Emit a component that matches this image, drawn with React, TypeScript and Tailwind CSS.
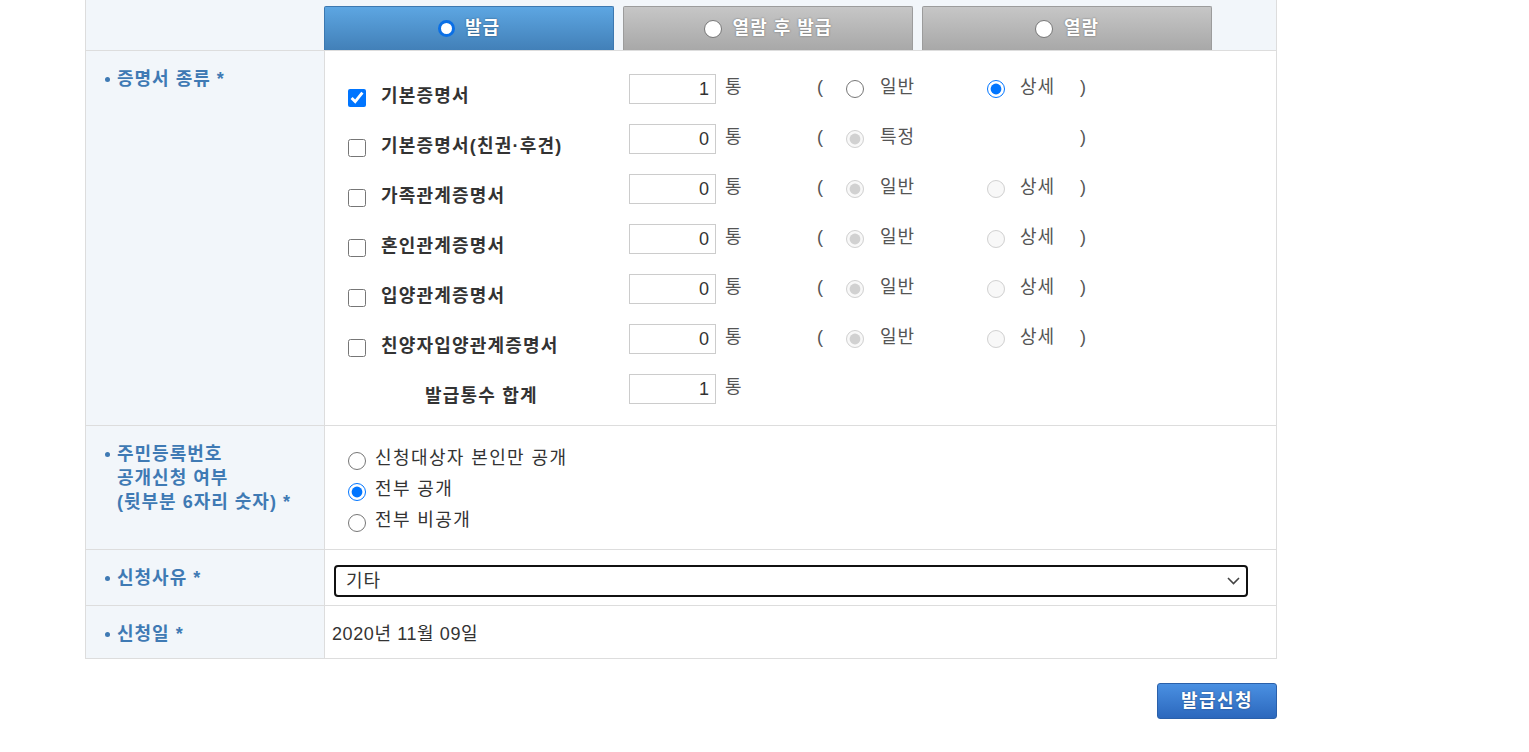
import { useState } from "react";

const certs = [
  { name: "기본증명서", checked: true, count: 1, opts: ["일반", "상세"], sel: 1, disabled: false },
  { name: "기본증명서(친권·후견)", checked: false, count: 0, opts: ["특정"], sel: 0, disabled: true },
  { name: "가족관계증명서", checked: false, count: 0, opts: ["일반", "상세"], sel: 0, disabled: true },
  { name: "혼인관계증명서", checked: false, count: 0, opts: ["일반", "상세"], sel: 0, disabled: true },
  { name: "입양관계증명서", checked: false, count: 0, opts: ["일반", "상세"], sel: 0, disabled: true },
  { name: "친양자입양관계증명서", checked: false, count: 0, opts: ["일반", "상세"], sel: 0, disabled: true },
];

const tabs = ["발급", "열람 후 발급", "열람"];

function Label({ children }: { children: React.ReactNode }) {
  return (
    <div className="flex items-start pl-[19px] pt-[16px] text-[18px] leading-[24px] tracking-[1px] font-bold text-[#3f7ab4]">
      <span className="mt-[10px] mr-[7px] w-[5px] h-[5px] rounded-full bg-[#3f7ab4] shrink-0" />
      <div>{children}</div>
    </div>
  );
}

function CountBox({ value }: { value: number }) {
  return (
    <div className="w-[87px] h-[30px] border border-[#cccccc] bg-white flex items-center justify-end pr-[6px] text-[18px] text-[#333]">
      {value}
    </div>
  );
}

export default function App() {
  const [tab] = useState(0);
  const [open, setOpen] = useState(1);

  return (
    <div className="w-[1529px] h-[752px] bg-white font-['Liberation_Sans','Noto_Sans_CJK_KR',sans-serif] text-[#333]">
      <div className="ml-[85px] w-[1192px] border-l border-r border-[#dddddd]">
        {/* tabs row */}
        <div className="h-[51px] bg-[#f2f6fa] border-b border-[#dddddd] flex gap-[9px] pl-[238px] pt-[6px]">
          {tabs.map((t, i) => (
            <div
              key={t}
              className={
                i === tab
                  ? "w-[290px] h-[44px] rounded-t-[2px] border border-b-0 border-[#3c78b0] bg-gradient-to-b from-[#5da6e2] to-[#4280b8] flex items-center justify-center gap-[10px]"
                  : "w-[290px] h-[44px] rounded-t-[2px] border border-b-0 border-[#9c9c9c] bg-gradient-to-b from-[#c6c6c6] to-[#a8a8a8] flex items-center justify-center gap-[11px]"
              }
            >
              <span
                className={
                  i === tab
                    ? "w-[17px] h-[17px] rounded-full bg-white border-[3px] border-[#0a6fe6]"
                    : "w-[18px] h-[18px] rounded-full bg-white border border-[#777]"
                }
              />
              <span className="text-[18px] tracking-[1px] font-bold text-white [text-shadow:0_0_2px_rgba(0,0,0,0.45)]">{t}</span>
            </div>
          ))}
        </div>

        {/* 증명서 종류 */}
        <div className="grid grid-cols-[238px_1fr] border-b border-[#dddddd] h-[375px]">
          <div className="bg-[#f2f6fa]">
            <Label>증명서 종류 *</Label>
          </div>
          <div className="border-l border-[#dddddd] pl-[23px] pt-[23px]">
            {certs.map((c) => (
              <div key={c.name} className="h-[50px] flex items-start">
                <div className="w-[281px] h-[24px] mt-[10px] flex items-center">
                  <input type="checkbox" checked={c.checked} readOnly className="m-0 w-[18px] h-[18px] mt-[4px]" />
                  <span className="ml-[15px] text-[18px] tracking-[1.2px] font-bold text-[#333] leading-[24px]">{c.name}</span>
                </div>
                <CountBox value={c.count} />
                <div className="h-[30px] flex items-center text-[18px] tracking-[1px] text-[#555]">
                  <span className="w-[101px] pl-[9px] -mt-[4px]">통</span>
                  <span className="w-[29px] -mt-[4px]">(</span>
                  <input
                    type="radio"
                    name={c.name}
                    checked={c.sel === 0}
                    disabled={c.disabled}
                    readOnly
                    className="m-0 w-[18px] h-[18px]"
                  />
                  <span className="w-[123px] pl-[16px] -mt-[4px]">{c.opts[0]}</span>
                  {c.opts[1] ? (
                    <input
                      type="radio"
                      name={c.name}
                      checked={c.sel === 1}
                      disabled={c.disabled}
                      readOnly
                      className="m-0 w-[18px] h-[18px]"
                    />
                  ) : (
                    <span className="w-[18px]" />
                  )}
                  <span className="w-[75px] pl-[15px] -mt-[4px]">{c.opts[1] ?? ""}</span>
                  <span className="-mt-[4px]">)</span>
                </div>
              </div>
            ))}
            <div className="h-[50px] flex items-start">
              <div className="w-[281px] h-[24px] mt-[10px] flex items-center pl-[77px]">
                <span className="text-[18px] tracking-[1.2px] font-bold text-[#333] leading-[24px]">발급통수 합계</span>
              </div>
              <CountBox value={1} />
              <div className="h-[30px] flex items-center text-[18px] text-[#555]">
                <span className="pl-[9px] -mt-[4px]">통</span>
              </div>
            </div>
          </div>
        </div>

        {/* 주민등록번호 공개 */}
        <div className="grid grid-cols-[238px_1fr] border-b border-[#dddddd] h-[124px]">
          <div className="bg-[#f2f6fa]">
            <Label>
              주민등록번호
              <br />
              공개신청 여부
              <br />
              (뒷부분 6자리 숫자) *
            </Label>
          </div>
          <div className="border-l border-[#dddddd] pl-[23px] pt-[19px]">
            {["신청대상자 본인만 공개", "전부 공개", "전부 비공개"].map((o, i) => (
              <label key={o} className="h-[31px] flex items-center">
                <input
                  type="radio"
                  name="open"
                  checked={open === i}
                  onChange={() => setOpen(i)}
                  className="m-0 w-[18px] h-[18px]"
                />
                <span className="ml-[9px] -mt-[4px] text-[18px] tracking-[1.4px] text-[#333]">{o}</span>
              </label>
            ))}
          </div>
        </div>

        {/* 신청사유 */}
        <div className="grid grid-cols-[238px_1fr] border-b border-[#dddddd] h-[56px]">
          <div className="bg-[#f2f6fa]">
            <Label>신청사유 *</Label>
          </div>
          <div className="border-l border-[#dddddd] pl-[9px] pr-[28px] pt-[15px]">
            <div className="relative">
              <select
                defaultValue="기타"
                className="w-full h-[32px] appearance-none border-2 border-[#111] rounded-[4px] pl-[10px] text-[18px] tracking-[1px] text-[#333] bg-white outline-none"
              >
                <option>기타</option>
              </select>
              <svg className="absolute right-[8px] top-[12px] pointer-events-none" width="13" height="8" viewBox="0 0 13 8">
                <path d="M1 1l5.5 5.5L12 1" fill="none" stroke="#444" strokeWidth="1.6" />
              </svg>
            </div>
          </div>
        </div>

        {/* 신청일 */}
        <div className="grid grid-cols-[238px_1fr] border-b border-[#dddddd] h-[53px]">
          <div className="bg-[#f2f6fa]">
            <Label>신청일 *</Label>
          </div>
          <div className="border-l border-[#dddddd] pl-[7px] pt-[16px] text-[18px] tracking-[0.6px] text-[#333] leading-[24px]">
            2020년 11월 09일
          </div>
        </div>
      </div>

      <div className="ml-[85px] w-[1192px] flex justify-end mt-[24px]">
        <button className="w-[120px] h-[36px] rounded-[3px] border border-[#2a60aa] bg-gradient-to-b from-[#4a90e2] to-[#2c68bd] text-white text-[18px] tracking-[1.5px] font-bold [text-shadow:0_0_2px_rgba(0,0,0,0.4)]">
          발급신청
        </button>
      </div>
    </div>
  );
}
